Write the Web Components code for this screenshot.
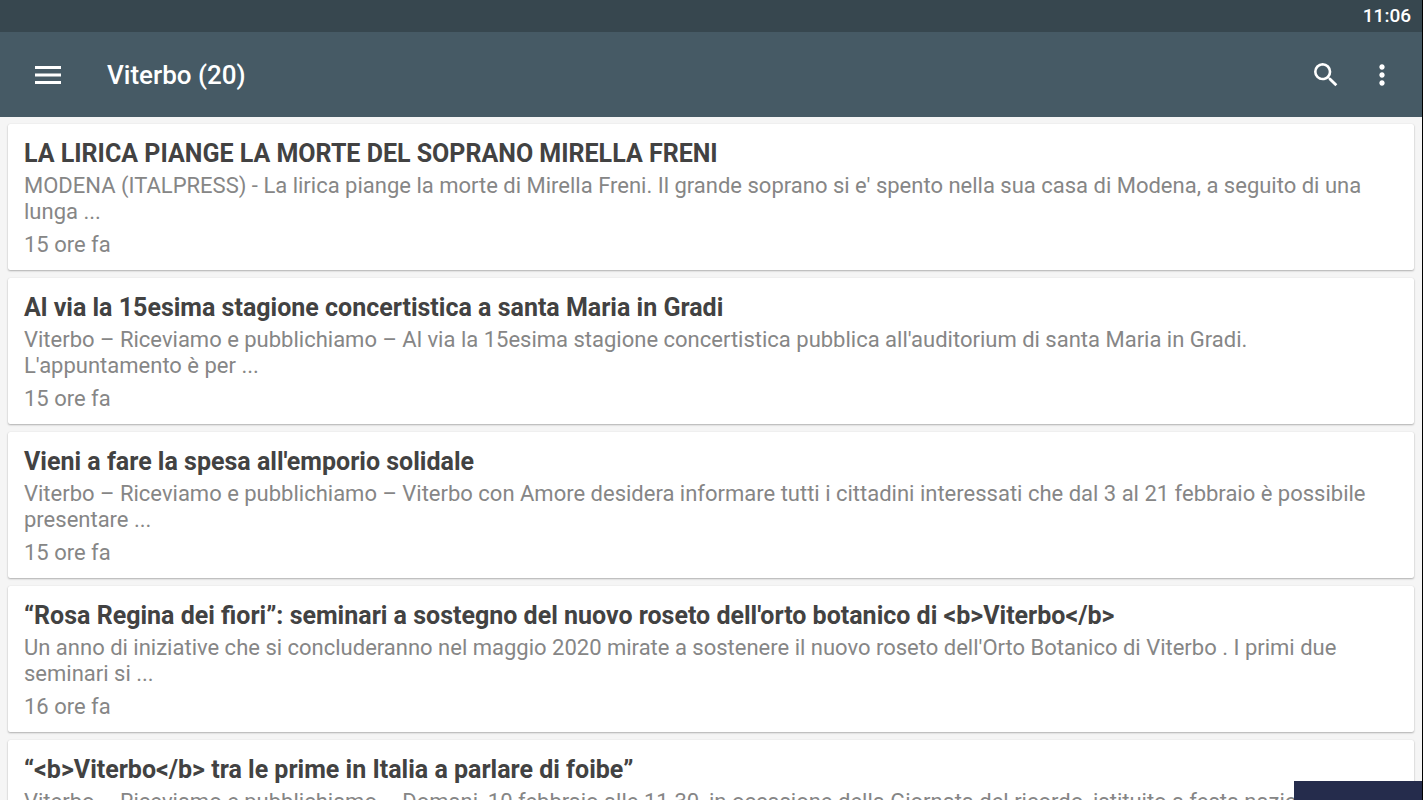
<!DOCTYPE html>
<html lang="it">
<head>
<meta charset="utf-8">
<meta name="viewport" content="width=device-width, initial-scale=1">
<title>Viterbo (20)</title>
<style>
html, body { height: 100%; margin: 0; }
body { font-family: Roboto, "Noto Sans", sans-serif; background: #f5f5f5; overflow: hidden; }
</style>
</head>
<body>
<news-app>
  <status-bar slot="top">11:06</status-bar>
  <app-toolbar slot="top">Viterbo (20)</app-toolbar>
  <news-card>
    <span slot="title">LA LIRICA PIANGE LA MORTE DEL SOPRANO MIRELLA FRENI</span>
    <span slot="summary">MODENA (ITALPRESS) - La lirica piange la morte di Mirella Freni. Il grande soprano si e' spento nella sua casa di Modena, a seguito di una lunga ...</span>
    <span slot="time">15 ore fa</span>
  </news-card>
  <news-card>
    <span slot="title">Al via la 15esima stagione concertistica a santa Maria in Gradi</span>
    <span slot="summary">Viterbo – Riceviamo e pubblichiamo – Al via la 15esima stagione concertistica pubblica all'auditorium di santa Maria in Gradi. L'appuntamento è per ...</span>
    <span slot="time">15 ore fa</span>
  </news-card>
  <news-card>
    <span slot="title">Vieni a fare la spesa all'emporio solidale</span>
    <span slot="summary">Viterbo – Riceviamo e pubblichiamo – Viterbo con Amore desidera informare tutti i cittadini interessati che dal 3 al 21 febbraio è possibile presentare ...</span>
    <span slot="time">15 ore fa</span>
  </news-card>
  <news-card>
    <span slot="title">“Rosa Regina dei fiori”: seminari a sostegno del nuovo roseto dell'orto botanico di &lt;b&gt;Viterbo&lt;/b&gt;</span>
    <span slot="summary">Un anno di iniziative che si concluderanno nel maggio 2020 mirate a sostenere il nuovo roseto dell'Orto Botanico di Viterbo . I primi due seminari si ...</span>
    <span slot="time">16 ore fa</span>
  </news-card>
  <news-card>
    <span slot="title">“&lt;b&gt;Viterbo&lt;/b&gt; tra le prime in Italia a parlare di foibe”</span>
    <span slot="summary">Viterbo – Riceviamo e pubblichiamo – Domani, 10 febbraio alle 11.30, in occasione della Giornata del ricordo, istituito a festa nazionale ...</span>
  </news-card>
  <corner-banner slot="overlay"></corner-banner>
</news-app>
<script>
const define = (name, html) => {
  const template = document.createElement('template');
  template.innerHTML = html;
  customElements.define(name, class extends HTMLElement {
    constructor() {
      super();
      this.attachShadow({ mode: 'open' }).append(template.content.cloneNode(true));
    }
  });
};

define('news-app', `
<style>
:host { display: flex; flex-direction: column; height: 100vh; box-sizing: border-box; border-right: 1px solid #000; overflow: hidden; background: #f5f5f5; }
header { flex: none; }
main { flex: 1; min-height: 0; overflow: hidden; display: flex; flex-direction: column; gap: 8px; padding: 7px 8px 8px; }
</style>
<header><slot name="top"></slot></header>
<main><slot></slot></main>
<slot name="overlay"></slot>`);

define('status-bar', `
<style>
:host { display: flex; justify-content: flex-end; align-items: center; height: 32px; padding: 0 11px; box-sizing: border-box; background: #37474f; color: #fff; font-size: 19px; line-height: 24px; font-weight: 500; }
</style>
<slot></slot>`);

define('app-toolbar', `
<style>
:host { display: flex; align-items: center; height: 85px; padding: 0 12px 0 20px; box-sizing: border-box; background: #465a65; color: #fff; }
h1 { flex: 1; margin: 0 0 0 31px; font-size: 26px; line-height: 32px; font-weight: 500; }
button { display: flex; align-items: center; justify-content: center; width: 56px; height: 56px; padding: 0; border: 0; background: none; color: inherit; }
svg { display: block; fill: currentColor; }
</style>
<button aria-label="Menu"><svg width="26" height="18" viewBox="0 0 26 18"><path d="M0 0h26v3H0zM0 7.500h26v3H0zM0 15h26v3H0z"/></svg></button>
<h1><slot></slot></h1>
<button aria-label="Cerca"><svg width="32" height="32" viewBox="0 0 24 24"><path d="M15.500 14h-.79l-.28-.27A6.471 6.471 0 0 0 16 9.500 6.500 6.500 0 1 0 9.500 16c1.610 0 3.090-.59 4.230-1.570l.27.28v.79l5 4.990L20.490 19l-4.990-5zm-6 0C7.010 14 5 11.990 5 9.500S7.010 5 9.500 5 14 7.010 14 9.500 11.990 14 9.500 14z"/></svg></button>
<button aria-label="Altre opzioni"><svg width="32" height="32" viewBox="0 0 24 24"><path d="M12 8c1.100 0 2-.9 2-2s-.9-2-2-2-2 .9-2 2 .9 2 2 2zm0 2c-1.100 0-2 .9-2 2s.9 2 2 2 2-.9 2-2-.9-2-2-2zm0 6c-1.100 0-2 .9-2 2s.9 2 2 2 2-.9 2-2-.9-2-2-2z"/></svg></button>`);

define('news-card', `
<style>
:host { display: block; flex: none; min-height: 146px; box-sizing: border-box; padding: 15px 16px 12px; border-radius: 2px; background: #fff; box-shadow: 0 1px 2px rgba(0,0,0,.28), 0 0 1px rgba(0,0,0,.12); }
h2, p { margin: 0; }
h2 { color: #424242; font-size: 25px; line-height: 30px; font-weight: 700; }
p { color: #868686; font-size: 22px; line-height: 26px; }
.summary { margin-top: 4px; }
.time { margin-top: 7px; }
</style>
<article>
  <h2><slot name="title"></slot></h2>
  <p class="summary"><slot name="summary"></slot></p>
  <p class="time"><slot name="time"></slot></p>
</article>`);

define('corner-banner', `
<style>
:host { position: fixed; right: 1px; bottom: 0; width: 128px; height: 19px; background: #252c4c; }
</style>`);
</script>
</body>
</html>
